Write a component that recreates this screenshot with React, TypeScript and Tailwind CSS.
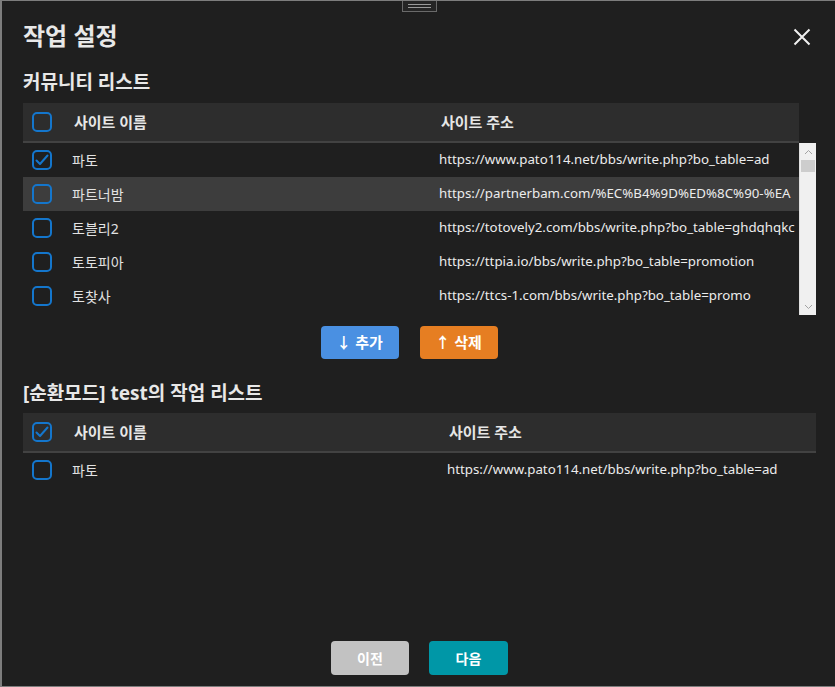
import React from "react";

type Site = { name: string; url: string; checked?: boolean; active?: boolean };

const communitySites: Site[] = [
  { name: "파토", url: "https://www.pato114.net/bbs/write.php?bo_table=ad", checked: true },
  { name: "파트너밤", url: "https://partnerbam.com/%EC%B4%9D%ED%8C%90-%EA", active: true },
  { name: "토블리2", url: "https://totovely2.com/bbs/write.php?bo_table=ghdqhqkc" },
  { name: "토토피아", url: "https://ttpia.io/bbs/write.php?bo_table=promotion" },
  { name: "토찾사", url: "https://ttcs-1.com/bbs/write.php?bo_table=promo" },
];

const taskSites: Site[] = [{ name: "파토", url: "https://www.pato114.net/bbs/write.php?bo_table=ad" }];

const font = { fontFamily: '"Noto Sans", "Noto Sans CJK KR", sans-serif' };

const CheckBox = ({ checked }: { checked?: boolean }) => (
  <div className="w-[20px] h-[20px] rounded-[5px] border-2 border-[#1476cc] flex items-center justify-center shrink-0">
    {checked && (
      <svg width="14" height="12" viewBox="0 0 14 12" fill="none">
        <path d="M1.5 6.5 L5 10 L12.5 1.5" stroke="#1476cc" strokeWidth="2" strokeLinecap="round" strokeLinejoin="round" />
      </svg>
    )}
  </div>
);

const TableHeader = ({ checked, addrCol }: { checked?: boolean; addrCol: string }) => (
  <div className="flex items-center h-[40px] bg-[#2d2d2d] border-b-2 border-[#424242] text-[15px] font-semibold text-[#e6e6e6]">
    <div className="w-[51px] pl-[9px] flex items-center">
      <CheckBox checked={checked} />
    </div>
    <div className={addrCol}>사이트 이름</div>
    <div className="flex-1">사이트 주소</div>
  </div>
);

const Row = ({ site, addrCol }: { site: Site; addrCol: string }) => (
  <div
    className={`flex items-center h-[34px] text-[14px] text-[#e2e2e2] whitespace-nowrap overflow-hidden ${
      site.active ? "bg-[#3d3d3d]" : ""
    }`}
  >
    <div className="w-[51px] pl-[9px] flex items-center shrink-0">
      <CheckBox checked={site.checked} />
    </div>
    <div className={`${addrCol} shrink-0 -ml-[2px]`}>{site.name}</div>
    <div className="flex-1 overflow-hidden text-[13.3px] text-[#ececec]">{site.url}</div>
  </div>
);

const ScrollBar = () => (
  <div className="w-[17px] h-full bg-[#f0f0f0] border-l border-[#e0e0e0] flex flex-col">
    <div className="h-[17px] flex items-center justify-center">
      <svg width="9" height="6" viewBox="0 0 9 6">
        <path d="M1 5 L4.5 1.5 L8 5" stroke="#a3a3a3" strokeWidth="1" fill="none" />
      </svg>
    </div>
    <div className="h-[12px] bg-[#cdcdcd] mx-[1px]" />
    <div className="flex-1" />
    <div className="h-[17px] flex items-center justify-center">
      <svg width="9" height="6" viewBox="0 0 9 6">
        <path d="M1 1 L4.5 4.5 L8 1" stroke="#a3a3a3" strokeWidth="1" fill="none" />
      </svg>
    </div>
  </div>
);

export default function App() {
  return (
    <div
      className="relative w-[835px] h-[687px] bg-[#1f1f1f] border-t border-l-2 border-b border-[#7d7d7d] flex flex-col overflow-hidden"
      style={font}
    >
      {/* drag handle */}
      <div className="absolute left-[400px] top-[-1px] w-[35px] h-[12px] border border-[#6a6a6a] bg-[#252525] flex flex-col justify-center gap-[2px] px-[5px]">
        <div className="h-px bg-[#9a9a9a]" />
        <div className="h-px bg-[#9a9a9a]" />
      </div>

      <div className="flex items-center justify-between pl-[21px] pr-[24px] pt-[20px]">
        <h1 className="text-[24px] font-bold text-[#e8e8e8] leading-[30px]">작업 설정</h1>
        <svg width="18" height="18" viewBox="0 0 18 18" className="mt-[1px]">
          <path d="M1.5 1.5 L16.5 16.5 M16.5 1.5 L1.5 16.5" stroke="#f0f0f0" strokeWidth="2" />
        </svg>
      </div>

      <div className="pl-[21px] pr-[19px]">
        <h2 className="mt-[19px] text-[19px] font-bold text-[#e8e8e8] leading-[24px]">커뮤니티 리스트</h2>

        <div className="mt-[9px] w-[776px]">
          <TableHeader addrCol="w-[367px]" />
        </div>
        <div className="flex h-[172px]">
          <div className="w-[776px]">
            {communitySites.map((s) => (
              <Row key={s.name} site={s} addrCol="w-[367px]" />
            ))}
          </div>
          <ScrollBar />
        </div>

        <div className="w-[772px] flex justify-center gap-[21px] mt-[11px]">
          <button className="w-[78px] h-[33px] rounded-[4px] bg-[#4a90e2] text-white text-[15px] font-bold">
            ↓ 추가
          </button>
          <button className="w-[78px] h-[33px] rounded-[4px] bg-[#e67e22] text-white text-[15px] font-bold">
            ↑ 삭제
          </button>
        </div>

        <h2 className="mt-[22px] text-[19px] font-bold text-[#e8e8e8] leading-[24px]">
          [순환모드] test의 작업 리스트
        </h2>

        <div className="mt-[8px] w-[793px]">
          <TableHeader checked addrCol="w-[375px]" />
          {taskSites.map((s) => (
            <Row key={s.name} site={s} addrCol="w-[375px]" />
          ))}
        </div>
      </div>

      <div className="mt-auto mb-[11px] flex justify-center gap-[20px] pl-[2px]">
        <button className="w-[78px] h-[34px] rounded-[4px] bg-[#c2c2c2] text-white text-[14px] font-bold">이전</button>
        <button className="w-[79px] h-[34px] rounded-[4px] bg-[#0097a7] text-white text-[14px] font-bold">다음</button>
      </div>
    </div>
  );
}
